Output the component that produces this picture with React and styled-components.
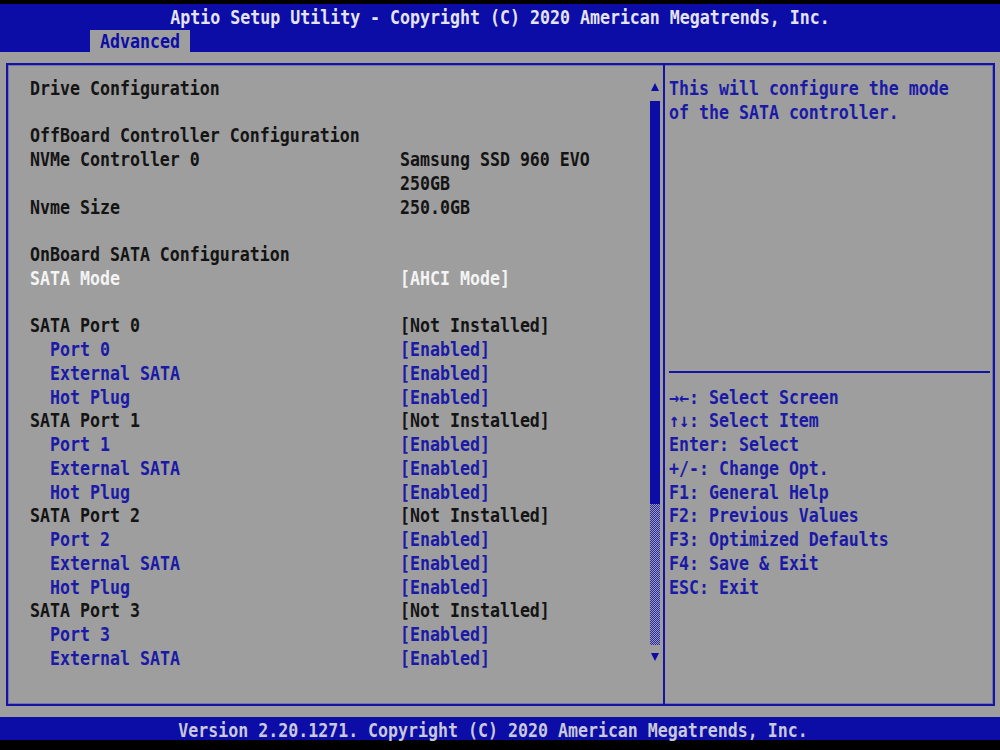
import React from "react";
import styled, { createGlobalStyle, css } from "styled-components";

const ROW = 23.75;
const BLUE = "#0c0ca6";
const GRAY = "#9e9e9e";

const GlobalStyle = createGlobalStyle`
	html, body {
		margin: 0;
		padding: 0;
		background: #000;
	}
	body {
		font-family: "DejaVu Sans Mono", "Liberation Mono", monospace;
		font-size: 16.6px;
		font-weight: bold;
	}
`;

// the BIOS bitmap font is taller than DejaVu, stretch it a little
const tall = css`
	display: inline-block;
	transform: translateY(2px) scaleY(1.14);
`;

const rows = [
	{ label: "Drive Configuration" },
	{},
	{ label: "OffBoard Controller Configuration" },
	{ label: "NVMe Controller 0", value: "Samsung SSD 960 EVO" },
	{ value: "250GB" },
	{ label: "Nvme Size", value: "250.0GB" },
	{},
	{ label: "OnBoard SATA Configuration" },
	{ label: "SATA Mode", value: "[AHCI Mode]", tone: "selected" },
	{},
];

[0, 1, 2, 3].forEach((n) => {
	rows.push({ label: `SATA Port ${n}`, value: "[Not Installed]" });
	rows.push({ label: `Port ${n}`, value: "[Enabled]", tone: "option", indent: true });
	rows.push({ label: "External SATA", value: "[Enabled]", tone: "option", indent: true });
	if (n < 3) rows.push({ label: "Hot Plug", value: "[Enabled]", tone: "option", indent: true });
});

const keys = [
	"→←: Select Screen",
	"↑↓: Select Item",
	"Enter: Select",
	"+/-: Change Opt.",
	"F1: General Help",
	"F2: Previous Values",
	"F3: Optimized Defaults",
	"F4: Save & Exit",
	"ESC: Exit",
];

export default function App() {
	return (
		<Screen>
			<GlobalStyle />
			<Header>
				<Title>
					<Text>Aptio Setup Utility - Copyright (C) 2020 American Megatrends, Inc.</Text>
				</Title>
				<TabRow>
					<Tab>
						<Text>Advanced</Text>
					</Tab>
				</TabRow>
			</Header>
			<Main>
				<Frame>
					<LeftPanel>
						<List>
							{rows.map((r, i) => (
								<Row key={i} tone={r.tone}>
									<Label indent={r.indent}>{r.label}</Label>
									<Value>{r.value}</Value>
								</Row>
							))}
						</List>
						<Scrollbar>
							<Arrow up />
							<Thumb />
							<Track />
							<Arrow />
						</Scrollbar>
					</LeftPanel>
					<RightPanel>
						<HelpText>
							<Line>
								<Text>This will configure the mode</Text>
							</Line>
							<Line>
								<Text>of the SATA controller.</Text>
							</Line>
						</HelpText>
						<Separator />
						<KeyList>
							{keys.map((k) => (
								<Line key={k}>
									<Text>{k}</Text>
								</Line>
							))}
						</KeyList>
					</RightPanel>
				</Frame>
			</Main>
			<Footer>
				<Text>Version 2.20.1271. Copyright (C) 2020 American Megatrends, Inc.</Text>
			</Footer>
		</Screen>
	);
}

const Screen = styled.div`
	width: 1000px;
	height: 750px;
	padding-top: 4px;
	box-sizing: border-box;
	background: #000;
	overflow: hidden;
`;

const Text = styled.span`
	${tall}
`;

const Header = styled.div`
	background: ${BLUE};
	height: ${ROW * 2}px;
	display: flex;
	flex-direction: column;
`;

const Title = styled.div`
	height: ${ROW}px;
	line-height: ${ROW}px;
	text-align: center;
	color: #e4e4f0;
	white-space: pre;
`;

const TabRow = styled.div`
	height: ${ROW}px;
	display: flex;
	align-items: flex-end;
	padding-left: 90px;
`;

const Tab = styled.div`
	background: ${GRAY};
	color: ${BLUE};
	width: 100px;
	box-sizing: border-box;
	padding-left: 10px;
	height: 22px;
	line-height: 20px;
`;

const Main = styled.div`
	background: ${GRAY};
	height: ${ROW * 28}px;
	box-sizing: border-box;
	padding: 11.5px 5px 10.5px 6px;
	display: flex;
`;

const Frame = styled.div`
	flex: 1;
	display: flex;
	border: 2px solid #1414a0;
	box-shadow: inset 0 0 0 1px #7474b2;
`;

const LeftPanel = styled.div`
	width: 655px;
	display: flex;
	padding-top: 9.75px;
	box-sizing: border-box;
`;

const List = styled.div`
	flex: 1;
	padding-left: 22px;
`;

const toneColor = {
	selected: "#f4f4f4",
	option: "#1a1aa6",
};

const Row = styled.div`
	height: ${ROW}px;
	line-height: ${ROW}px;
	display: grid;
	grid-template-columns: 370px 1fr;
	color: ${(p) => toneColor[p.tone] || "#141414"};
	white-space: pre;
	& > span {
		${tall}
	}
`;

const Label = styled.span`
	padding-left: ${(p) => (p.indent ? "20px" : "0")};
`;

const Value = styled.span``;

const Scrollbar = styled.div`
	width: 10px;
	margin-right: 3px;
	display: flex;
	flex-direction: column;
`;

const Arrow = styled.div`
	height: ${ROW}px;
	display: flex;
	align-items: center;
	justify-content: center;
	&::before {
		content: "";
		width: 0;
		height: 0;
		border-left: 4.5px solid transparent;
		border-right: 4.5px solid transparent;
		${(p) =>
			p.up
				? `border-bottom: 8px solid ${BLUE};`
				: `border-top: 8px solid ${BLUE};`}
	}
`;

const Thumb = styled.div`
	height: ${ROW * 17}px;
	margin-top: 2px;
	background: ${BLUE};
`;

const Track = styled.div`
	height: ${ROW * 6 - 2}px;
	background: repeating-conic-gradient(#2a2aa8 0 25%, #9a9ab0 0 50%) 0 0 / 2px 2px;
`;

const RightPanel = styled.div`
	flex: 1;
	border-left: 2px solid #1414a0;
	padding: 9.75px 3px 0 4px;
	display: flex;
	flex-direction: column;
	color: #1a1aa6;
`;

const HelpText = styled.div`
	height: ${ROW * 12}px;
`;

const Separator = styled.div`
	height: ${ROW}px;
	display: flex;
	align-items: center;
	&::before {
		content: "";
		flex: 1;
		height: 2px;
		background: #1414a0;
	}
`;

const KeyList = styled.div``;

const Line = styled.div`
	height: ${ROW}px;
	line-height: ${ROW}px;
	white-space: pre;
`;

const Footer = styled.div`
	background: ${BLUE};
	height: ${ROW}px;
	line-height: ${ROW}px;
	text-align: center;
	padding-right: 14px;
	color: #c8c8d8;
	white-space: pre;
`;
